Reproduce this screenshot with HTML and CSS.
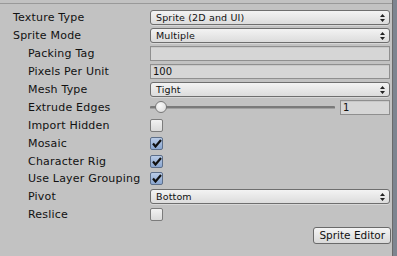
FILE: index.html
```html
<!DOCTYPE html>
<html>
<head>
<meta charset="utf-8">
<link rel="stylesheet" href="styles.css">
</head>
<body>
<div class="panel">
  <div class="inspector">
    <div class="row"><span class="label">Texture Type</span><div class="popup"><span>Sprite (2D and UI)</span><svg class="arrows" width="5" height="8" viewBox="0 0 5 8"><path d="M2.5 0 L5 3 L0 3 Z M0 5 L5 5 L2.5 8 Z" fill="#222"/></svg></div></div>
    <div class="row"><span class="label">Sprite Mode</span><div class="popup"><span>Multiple</span><svg class="arrows" width="5" height="8" viewBox="0 0 5 8"><path d="M2.5 0 L5 3 L0 3 Z M0 5 L5 5 L2.5 8 Z" fill="#222"/></svg></div></div>
    <div class="row"><span class="label sub">Packing Tag</span><div class="field"></div></div>
    <div class="row"><span class="label sub">Pixels Per Unit</span><div class="field">100</div></div>
    <div class="row"><span class="label sub">Mesh Type</span><div class="popup"><span>Tight</span><svg class="arrows" width="5" height="8" viewBox="0 0 5 8"><path d="M2.5 0 L5 3 L0 3 Z M0 5 L5 5 L2.5 8 Z" fill="#222"/></svg></div></div>
    <div class="row"><span class="label sub">Extrude Edges</span>
      <div class="slider-wrap">
        <div class="slider"><div class="track"></div><div class="thumb"></div></div>
        <div class="field num">1</div>
      </div>
    </div>
    <div class="row"><span class="label sub">Import Hidden</span><div class="check"></div></div>
    <div class="row"><span class="label sub">Mosaic</span><div class="check on"><svg width="10" height="9" viewBox="0 0 10 9"><path d="M1 4.5 L3.5 7.5 L9 1" stroke="#111" stroke-width="2.2" fill="none"/></svg></div></div>
    <div class="row"><span class="label sub">Character Rig</span><div class="check on"><svg width="10" height="9" viewBox="0 0 10 9"><path d="M1 4.5 L3.5 7.5 L9 1" stroke="#111" stroke-width="2.2" fill="none"/></svg></div></div>
    <div class="row"><span class="label sub">Use Layer Grouping</span><div class="check on"><svg width="10" height="9" viewBox="0 0 10 9"><path d="M1 4.5 L3.5 7.5 L9 1" stroke="#111" stroke-width="2.2" fill="none"/></svg></div></div>
    <div class="row"><span class="label sub">Pivot</span><div class="popup"><span>Bottom</span><svg class="arrows" width="5" height="8" viewBox="0 0 5 8"><path d="M2.5 0 L5 3 L0 3 Z M0 5 L5 5 L2.5 8 Z" fill="#222"/></svg></div></div>
    <div class="row"><span class="label sub">Reslice</span><div class="check"></div></div>
    <div class="actions"><button class="btn">Sprite Editor</button></div>
  </div>
  <div class="edge"></div>
</div>
</body>
</html>
```
FILE: styles.css
```css
html, body {
  margin: 0;
  padding: 0;
  background: #c2c2c2;
  width: 397px;
  height: 256px;
  overflow: hidden;
  font-family: "DejaVu Sans", Verdana, sans-serif;
  color: #111;
}
.panel {
  display: flex;
  height: 256px;
}
.inspector {
  flex: 1;
  border-top: 1px solid #999;
  margin-top: 3px;
  padding: 5px 2px 0 13px;
}
.edge {
  width: 4px;
  border-left: 1px solid #6a6a6a;
  background: #7d8590;
}
.row {
  display: grid;
  grid-template-columns: 137px 1fr;
  align-items: center;
  height: 17.9px;
}
.label {
  font-size: 11px;
  letter-spacing: 0.2px;
  white-space: nowrap;
}
.label.sub {
  padding-left: 15px;
}
.popup {
  height: 13px;
  border: 1px solid #6e6e6e;
  border-radius: 3px;
  background: linear-gradient(#f3f3f3, #dcdcdc);
  display: flex;
  align-items: center;
  justify-content: space-between;
  padding: 0 4px 0 5px;
  font-size: 9.5px;
  letter-spacing: 0.15px;
  box-shadow: 0 1px 0 rgba(255,255,255,0.35);
}
.arrows { display: block; }
.field {
  height: 13px;
  border: 1px solid #8f8f8f;
  background: #d6d6d6;
  font-size: 10px;
  line-height: 13px;
  padding-left: 2px;
  box-shadow: inset 0 1px 0 #c8c8c8;
}
.slider-wrap {
  display: flex;
  align-items: center;
  gap: 5px;
}
.slider {
  position: relative;
  flex: 1;
  height: 13px;
}
.track {
  position: absolute;
  left: 0;
  right: 0;
  top: 5px;
  height: 2px;
  background: #7a7a7a;
  border-bottom: 1px solid #a0a0a0;
  border-radius: 1px;
}
.thumb {
  position: absolute;
  left: 5px;
  top: 0;
  width: 10px;
  height: 10px;
  border: 1px solid #777;
  border-radius: 50%;
  background: radial-gradient(circle at 40% 35%, #fafafa, #d8d8d8);
}
.num {
  width: 46px;
  flex: none;
}
.check {
  width: 11px;
  height: 11px;
  border: 1px solid #7c7c7c;
  border-radius: 2px;
  background: linear-gradient(#f2f2f2, #dadada);
  display: flex;
  align-items: center;
  justify-content: center;
}
.check.on {
  background: linear-gradient(#b9cbe6, #8aa6d0);
  border-color: #5d6f8a;
}
.check svg { display: block; }
.actions {
  display: flex;
  justify-content: flex-end;
  margin-top: 3px;
  margin-right: -1px;
}
.btn {
  font-family: "DejaVu Sans", Verdana, sans-serif;
  font-size: 10.5px;
  height: 17px;
  padding: 0 5px;
  border: 1px solid #6a6a6a;
  border-radius: 3px;
  background: linear-gradient(#f4f4f4, #d9d9d9);
  color: #111;
  line-height: 15px;
}
```
